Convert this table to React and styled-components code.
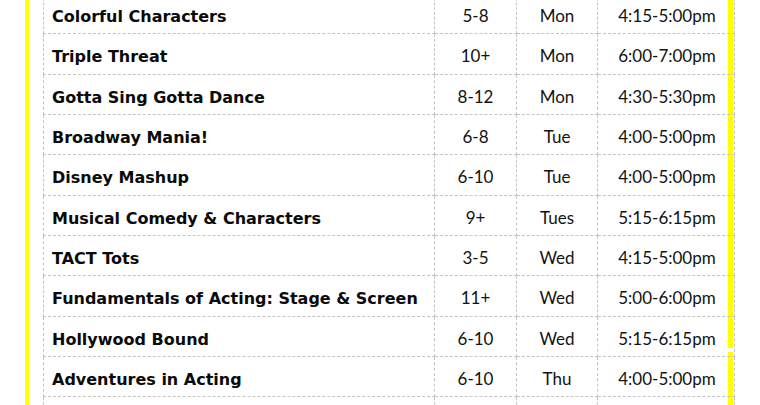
import React from "react";
import styled, { createGlobalStyle } from "styled-components";

const classes = [
    { name: "Colorful Characters", ages: "5-8", day: "Mon", time: "4:15-5:00pm" },
    { name: "Triple Threat", ages: "10+", day: "Mon", time: "6:00-7:00pm" },
    { name: "Gotta Sing Gotta Dance", ages: "8-12", day: "Mon", time: "4:30-5:30pm" },
    { name: "Broadway Mania!", ages: "6-8", day: "Tue", time: "4:00-5:00pm" },
    { name: "Disney Mashup", ages: "6-10", day: "Tue", time: "4:00-5:00pm" },
    { name: "Musical Comedy & Characters", ages: "9+", day: "Tues", time: "5:15-6:15pm" },
    { name: "TACT Tots", ages: "3-5", day: "Wed", time: "4:15-5:00pm" },
    { name: "Fundamentals of Acting: Stage & Screen", ages: "11+", day: "Wed", time: "5:00-6:00pm" },
    { name: "Hollywood Bound", ages: "6-10", day: "Wed", time: "5:15-6:15pm" },
    { name: "Adventures in Acting", ages: "6-10", day: "Thu", time: "4:00-5:00pm" },
    { name: "\u00a0", ages: "\u00a0", day: "\u00a0", time: "\u00a0" },
];

const columns = [391, 82, 81, 137];

const GlobalStyle = createGlobalStyle`
    html, body {
        margin: 0;
        padding: 0;
        background: #ffffff;
        overflow: hidden;
    }
    body {
        font-family: "Lato", "Open Sans", sans-serif;
        color: #111111;
    }
`;

const Page = styled.div`
    height: 405px;
    overflow: hidden;
`;

const Frame = styled.section`
    margin: -7px 0 0 25px;
    width: 708px;
    border-left: 4px solid #ffff00;
    padding-left: 14px;
    box-sizing: border-box;
    background:
        linear-gradient(#ffff00, #ffff00) right top / 5px 355px no-repeat,
        linear-gradient(#ffff00, #ffff00) right 359px / 5px 200px no-repeat;
`;

const Table = styled.table`
    width: 691px;
    border-collapse: collapse;
    table-layout: fixed;
`;

const Col = styled.col`
    width: ${(p) => p.$w}px;
`;

const Cell = styled.td`
    height: 40.33px;
    box-sizing: border-box;
    border: 1px dashed #c4c4c4;
    padding: 5px 8px 0 8px;
    font-size: 17px;
    line-height: 20px;
    white-space: nowrap;
    text-align: center;
    color: #121212;
`;

const NameCell = styled(Cell)`
    font-family: "DejaVu Sans", "Open Sans", sans-serif;
    font-size: 16px;
    font-weight: 700;
    text-align: left;
    padding-top: 7px;
    color: #0a0a0a;
`;

const TimeCell = styled(Cell)`
    padding-left: 10px;
`;

const App = () => {
    return (
        <Page>
            <GlobalStyle />
            <Frame>
                <Table>
                    <colgroup>
                        {columns.map((w, i) => (
                            <Col key={i} $w={w} />
                        ))}
                    </colgroup>
                    <tbody>
                        {classes.map((c, i) => (
                            <tr key={i}>
                                <NameCell>{c.name}</NameCell>
                                <Cell>{c.ages}</Cell>
                                <Cell>{c.day}</Cell>
                                <TimeCell>{c.time}</TimeCell>
                            </tr>
                        ))}
                    </tbody>
                </Table>
            </Frame>
        </Page>
    );
};

export default App;
